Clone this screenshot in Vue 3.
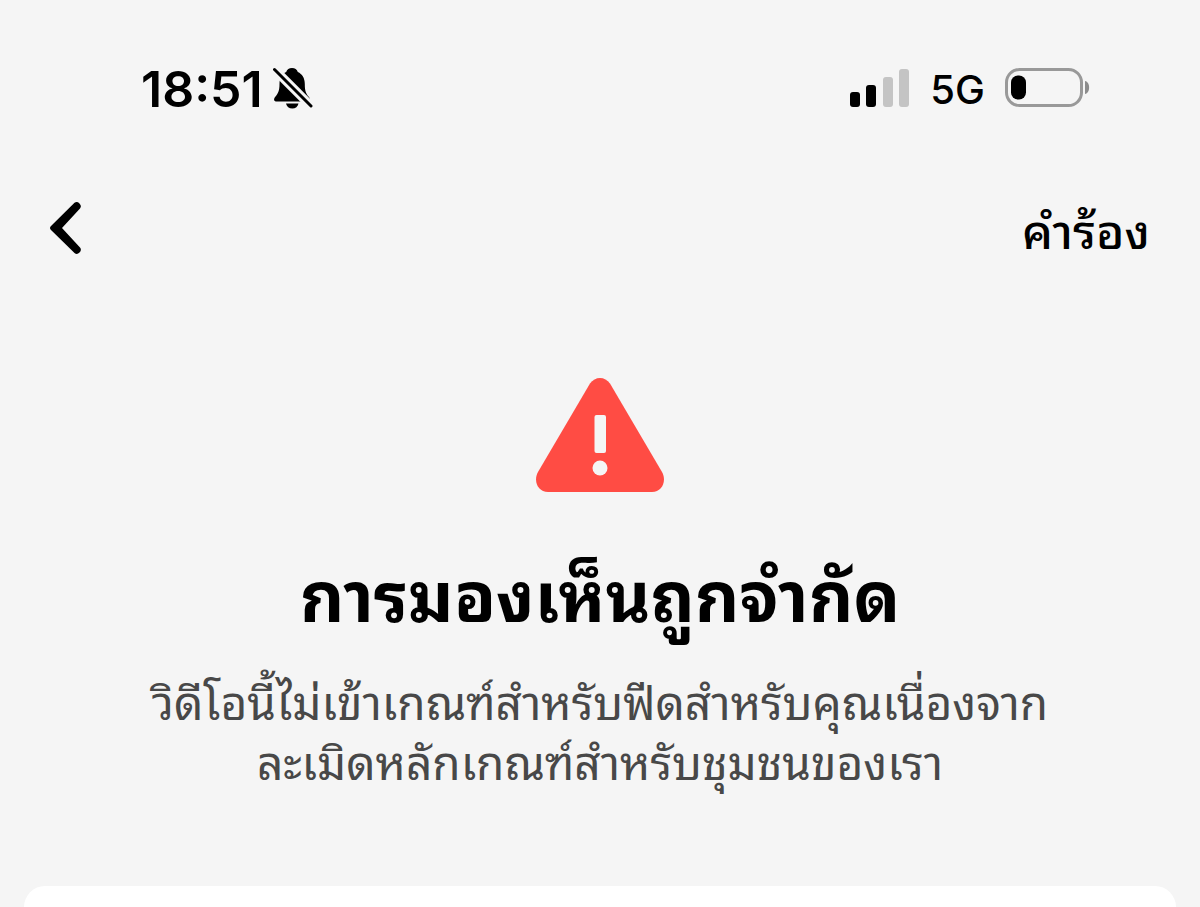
<script setup>
const signalBars = [
  { x: 0, height: 15, active: true },
  { x: 16, height: 22, active: true },
  { x: 33, height: 30, active: false },
  { x: 49, height: 38, active: false }
];

const description = [
  "วิดีโอนี้ไม่เข้าเกณฑ์สำหรับฟีดสำหรับคุณเนื่องจาก",
  "ละเมิดหลักเกณฑ์สำหรับชุมชนของเรา"
];
</script>

<template>
  <div class="screen">
    <header class="status-bar">
      <div class="status-group">
        <time class="clock">18:51</time>
        <svg class="bell" viewBox="0 0 40 42" aria-label="Silent mode">
          <path
            d="M19 1c-3 0-5 1.600-5.800 4C9 7 6.500 11 6.500 17c0 7-1.500 9.500-4 12.500C0 32.500 1 34.500 4 34.500h30c3 0 4-2 1.500-5C33 26.500 31.800 24 31.800 17c0-6-2.600-10-7-12C24 2.600 22 1 19 1z"
          />
          <path d="M13 36.500h12.500c-.6 3-3 5-6.200 5s-5.700-2-6.300-5z" />
          <path class="bell-gap" d="M1.500 2.500 38 39" />
          <path class="bell-slash" d="M1.500 2.500 38 39" />
        </svg>
      </div>
      <div class="status-group">
        <svg class="signal" viewBox="0 0 60 38" aria-label="Signal strength">
          <rect
            v-for="bar in signalBars"
            :key="bar.x"
            :class="{ 'signal-active': bar.active }"
            :x="bar.x"
            :y="38 - bar.height"
            width="10"
            :height="bar.height"
            rx="3"
          />
        </svg>
        <span class="network">5G</span>
        <svg class="battery" viewBox="0 0 85 40" aria-label="Battery low">
          <rect class="battery-shell" x="1.500" y="1.500" width="75" height="36" rx="13" />
          <rect x="6" y="7.500" width="15" height="24" rx="7" />
          <path class="battery-cap" d="M80 13c5.500 1 5.500 12 0 13z" />
        </svg>
      </div>
    </header>

    <nav class="nav-bar">
      <button class="back" type="button" aria-label="Back">
        <svg viewBox="0 0 32 52">
          <path d="M24.500 0.800Q27 -1 29.500 1.500T30 6.500L12 26 30 45.500Q32 48 29.500 50.500T24.500 51L1 28Q-1 26 1 24z" />
        </svg>
      </button>
      <a class="appeals" href="#">คำร้อง</a>
    </nav>

    <main class="notice">
      <svg class="warning" viewBox="0 0 130 116" aria-hidden="true">
        <path
          class="warning-body"
          d="M55 6.500C60 -1 70 -1 75 6.500L127 95C132 104 127 115 117 115H13C3 115 -2 104 3 95z"
        />
        <rect x="59.500" y="38" width="11.500" height="38" rx="2" />
        <circle cx="65" cy="91" r="7.500" />
      </svg>
      <h1 class="title">การมองเห็นถูกจำกัด</h1>
      <p class="description">
        <span v-for="line in description" :key="line" class="description-line">{{ line }}</span>
      </p>
    </main>

    <section class="card"></section>
  </div>
</template>

<style>
body {
  background: #f5f5f5;
}
</style>

<style scoped>
.screen {
  min-height: 100vh;
  display: flex;
  flex-direction: column;
  background: #f5f5f5;
  color: #000;
  font-family: Inter, "Noto Sans Thai Looped", Loma, "Noto Sans Thai", sans-serif;
  box-sizing: border-box;
  overflow: hidden;
}

.status-bar {
  display: flex;
  justify-content: space-between;
  align-items: center;
  height: 60px;
  padding: 58px 110px 0 141px;
}

.status-group {
  display: flex;
  align-items: center;
}

.clock {
  margin-top: 2px;
  font-size: 50px;
  line-height: 60px;
  font-weight: 600;
}

.bell {
  width: 40px;
  height: 42px;
  margin-left: 10px;
}

.bell-gap,
.bell-slash {
  fill: none;
  stroke: #f5f5f5;
  stroke-width: 9;
}

.bell-slash {
  stroke: #000;
  stroke-width: 3;
  stroke-linecap: round;
}

.signal {
  width: 60px;
  height: 38px;
  fill: #c4c4c4;
}

.signal .signal-active {
  fill: #000;
}

.network {
  font-size: 40px;
  line-height: 60px;
  font-weight: 500;
  margin: 4px 20px 0;
}

.battery {
  width: 85px;
  height: 40px;
}

.battery-shell {
  fill: none;
  stroke: #999;
  stroke-width: 3;
}

.battery-cap {
  fill: #8c8c8c;
}

.nav-bar {
  display: flex;
  justify-content: space-between;
  align-items: center;
  height: 80px;
  padding: 70px 50px 0;
}

.back {
  display: flex;
  padding: 0;
  border: none;
  background: none;
  cursor: pointer;
}

.back svg {
  width: 32px;
  height: 52px;
}

.appeals {
  padding-top: 8px;
  color: #000;
  font-size: 48px;
  line-height: 64px;
  font-weight: 500;
  text-decoration: none;
}

.notice {
  display: flex;
  flex-direction: column;
  align-items: center;
  padding: 109px 24px 0;
  text-align: center;
}

.warning {
  width: 130px;
  height: 116px;
  fill: #f5f5f5;
}

.warning-body {
  fill: #ff4c44;
}

.title {
  margin: 54px 0 0;
  font-size: 69px;
  line-height: 100px;
  font-weight: 700;
}

.description {
  margin: 26px 0 0;
  color: #484848;
  font-size: 46px;
  line-height: 60px;
}

.description-line {
  display: block;
}

.card {
  flex: 1;
  min-height: 21px;
  margin: 93px 24px 0;
  border-radius: 24px 24px 0 0;
  background: #fff;
}
</style>
